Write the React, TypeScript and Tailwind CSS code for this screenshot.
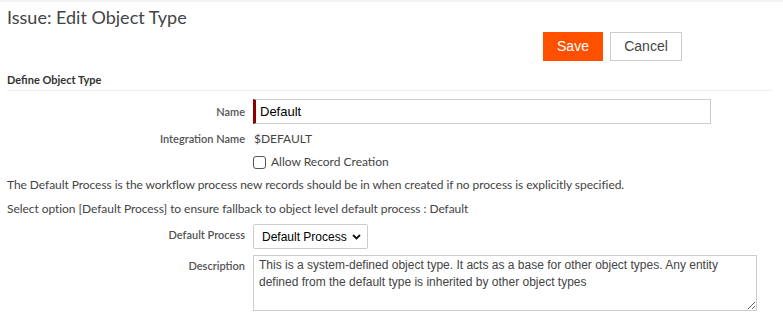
import { useState } from 'react'

export default function App() {
  const [name, setName] = useState('Default')
  const [desc, setDesc] = useState(
    'This is a system-defined object type. It acts as a base for other object types. Any entity defined from the default type is inherited by other object types'
  )

  return (
    <div className="w-[783px] h-[334px] bg-white overflow-hidden font-['Lato',sans-serif] text-[#333]">
      {/* top rule */}
      <div className="h-[2px] bg-[#f3f3f3]" />

      {/* Header */}
      <h1 className="px-[7px] pt-[3px] text-[18px] leading-[24px] text-[#444]">Issue: Edit Object Type</h1>

      <div className="flex gap-[7px] pl-[543px] mt-[3px] font-['Liberation_Sans',Arial,sans-serif] text-[14px]">
        <button className="w-[60px] h-[29px] bg-[#ff5000] text-white">Save</button>
        <button className="w-[72px] h-[29px] bg-white border border-[#ccc] text-[#444]">Cancel</button>
      </div>

      {/* Section */}
      <div className="mx-[7px] mr-[12px] mt-[12px] pb-[3px] border-b border-[#eee] text-[11px] font-bold leading-[14px] text-[#333]">
        Define Object Type
      </div>

      <div className="mt-[8px] text-[11px]">
        {/* Name */}
        <div className="flex">
          <label className="w-[245px] text-right pt-[6px] leading-[14px] font-semibold text-[#555]">Name</label>
          <input
            value={name}
            onChange={(e) => setName(e.target.value)}
            className="ml-[8px] w-[458px] h-[25px] border border-[#ccc] border-l-[3px] border-l-[#8b0000] pl-[4px] text-[13px] font-['Liberation_Sans',Arial,sans-serif] text-black outline-none"
          />
        </div>

        {/* Integration Name */}
        <div className="flex mt-[7px] items-center">
          <label className="w-[245px] text-right leading-[14px] font-semibold text-[#555]">Integration Name</label>
          <span className="ml-[9px] text-[12px] leading-[16px] text-[#444]">$DEFAULT</span>
        </div>

        {/* Allow Record Creation */}
        <label className="flex mt-[7px] items-center pl-[253px]">
          <input
            type="checkbox"
            className="appearance-none w-[13px] h-[13px] m-0 border border-[#555] rounded-[3px] bg-white"
          />
          <span className="ml-[5px] text-[12px] leading-[16px] text-[#444]">Allow Record Creation</span>
        </label>

        <p className="mt-[7px] px-[7px] text-[12px] leading-[16px] tracking-[-0.06px] text-[#444]">
          The Default Process is the workflow process new records should be in when created if no process is explicitly specified.
        </p>
        <p className="mt-[8px] px-[7px] text-[12px] leading-[16px] tracking-[-0.06px] text-[#444]">
          Select option [Default Process] to ensure fallback to object level default process : Default
        </p>

        {/* Default Process */}
        <div className="flex mt-[7px]">
          <label className="w-[245px] text-right pt-[4px] leading-[14px] font-semibold text-[#555]">Default Process</label>
          <div className="relative ml-[8px]">
            <select className="appearance-none w-[115px] h-[25px] border border-[#ccc] rounded-[2px] bg-white pl-[8px] pr-[20px] text-[12px] font-['Liberation_Sans',Arial,sans-serif] text-black outline-none">
              <option>Default Process</option>
            </select>
            <svg
              className="absolute right-[7px] top-[10px] pointer-events-none"
              width="9"
              height="6"
              viewBox="0 0 9 6"
              fill="none"
              stroke="#111"
              strokeWidth={1.8}
            >
              <path d="M1 1l3.5 3.5L8 1" />
            </svg>
          </div>
        </div>

        {/* Description */}
        <div className="flex mt-[6px]">
          <label className="w-[245px] text-right pt-[4px] leading-[14px] font-semibold text-[#555]">Description</label>
          <textarea
            value={desc}
            onChange={(e) => setDesc(e.target.value)}
            className="ml-[8px] w-[504px] h-[56px] border border-[#ccc] px-[5px] pt-[1px] text-[12px] leading-[17px] font-['Liberation_Sans',Arial,sans-serif] text-[#444] outline-none"
          />
        </div>
      </div>
    </div>
  )
}
